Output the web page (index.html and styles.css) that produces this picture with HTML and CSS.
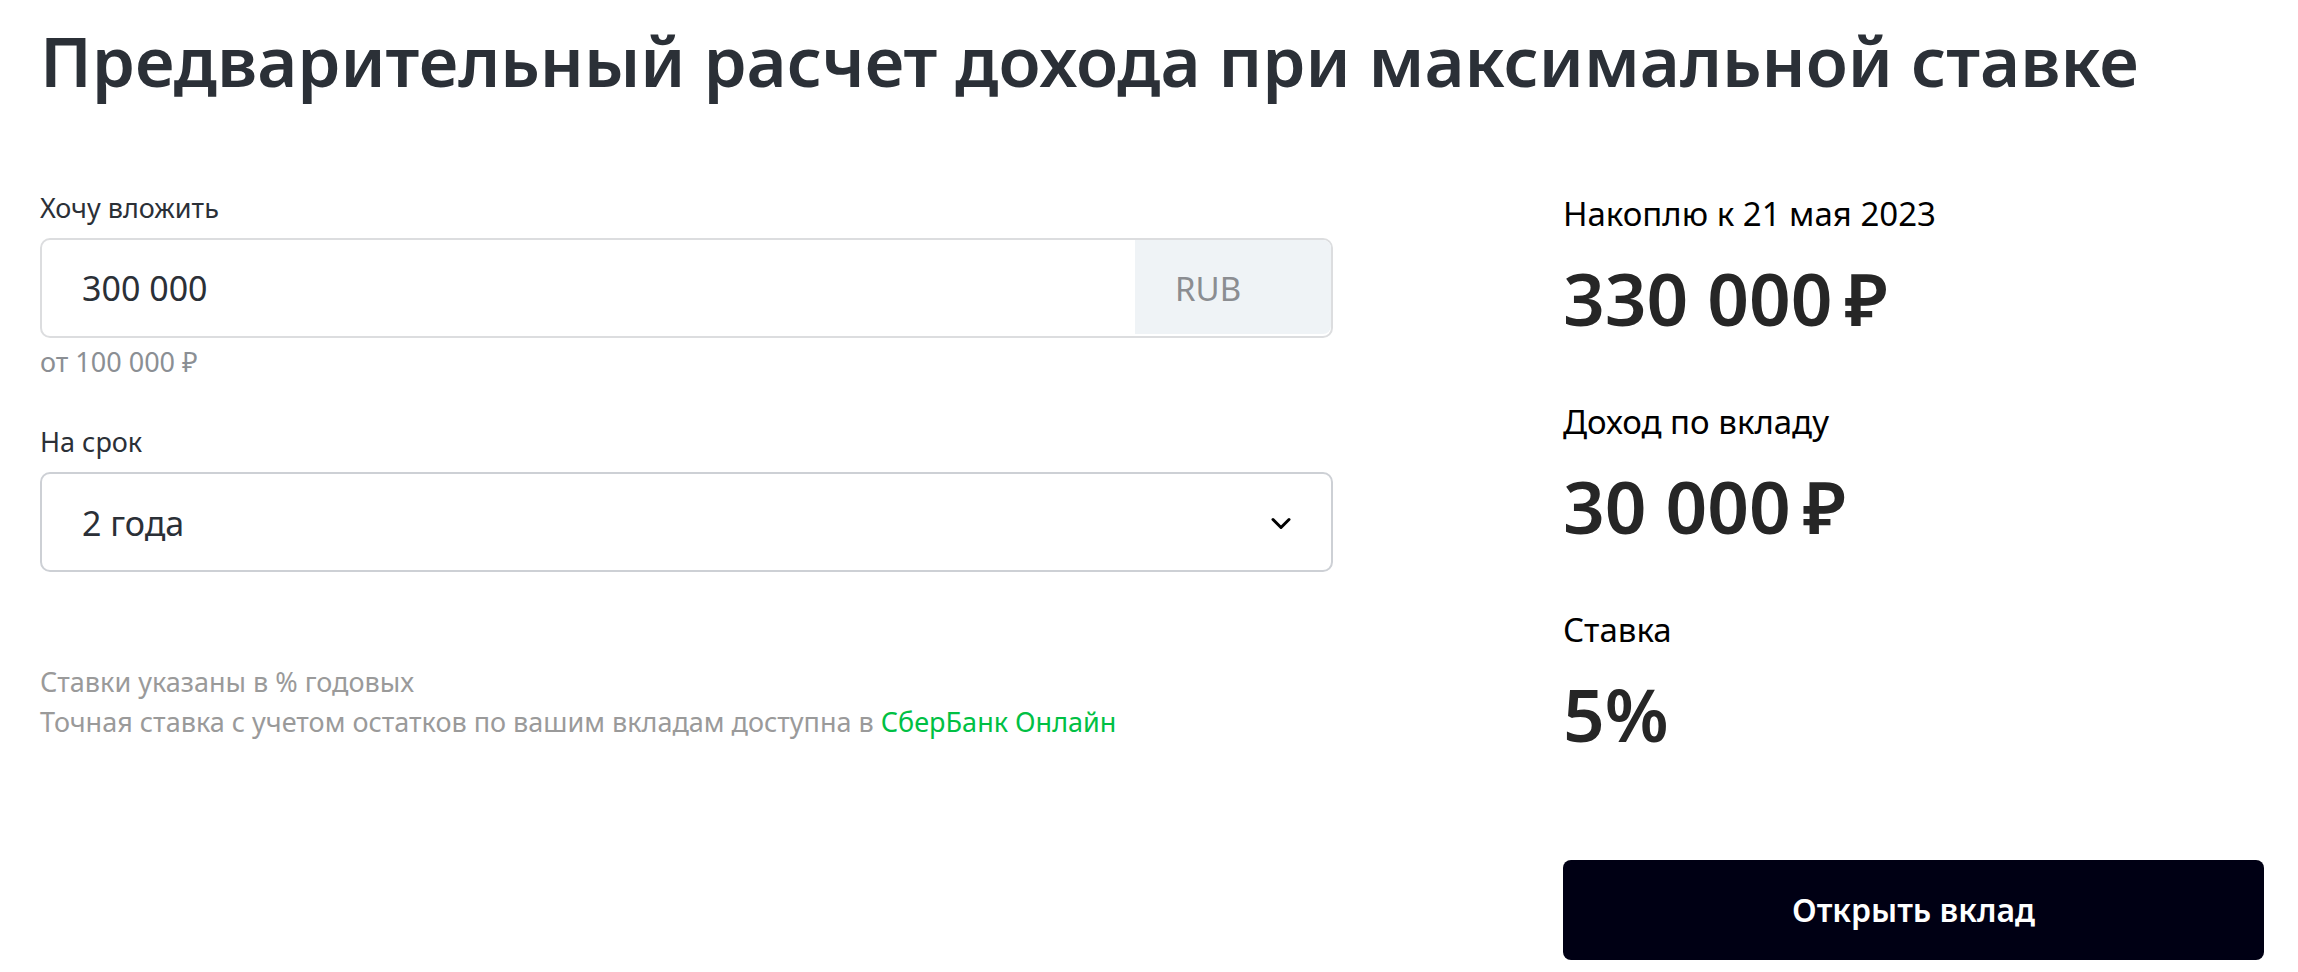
FILE: index.html
```html
<!DOCTYPE html>
<html lang="ru">
<head>
<meta charset="utf-8">
<meta name="viewport" content="width=device-width, initial-scale=1">
<title>Расчет дохода по вкладу</title>
<link rel="stylesheet" href="styles.css">
</head>
<body>
<main class="calculator">
  <h1 class="title">Предварительный расчет дохода при максимальной ставке</h1>
  <div class="columns">
    <form class="form">
      <div class="field">
        <label class="field-label" for="amount">Хочу вложить</label>
        <div class="amount-box">
          <input class="amount-input" id="amount" type="text" inputmode="numeric" value="300 000">
          <span class="currency">RUB</span>
        </div>
        <p class="hint">от 100 000 ₽</p>
      </div>
      <div class="field">
        <label class="field-label" for="term">На срок</label>
        <div class="select-box">
          <select class="term-select" id="term">
            <option>2 года</option>
          </select>
          <svg class="chevron" viewBox="0 0 20 14" aria-hidden="true"><path d="M2 2.5 10 10.5 18 2.5"/></svg>
        </div>
      </div>
      <p class="notes">Ставки указаны в % годовых<br>Точная ставка с учетом остатков по вашим вкладам доступна в <a class="link" href="#online">СберБанк Онлайн</a></p>
    </form>
    <section class="results">
      <dl class="result-list">
        <div class="result">
          <dt class="result-name">Накоплю к 21 мая 2023</dt>
          <dd class="result-value">330 000<span class="rouble">₽</span></dd>
        </div>
        <div class="result">
          <dt class="result-name">Доход по вкладу</dt>
          <dd class="result-value">30 000<span class="rouble">₽</span></dd>
        </div>
        <div class="result">
          <dt class="result-name">Ставка</dt>
          <dd class="result-value">5%</dd>
        </div>
      </dl>
      <button class="open-button" type="button">Открыть вклад</button>
    </section>
  </div>
</main>
</body>
</html>
```
FILE: styles.css
```css
* {
  box-sizing: border-box;
}

body {
  margin: 0;
  background: #fff;
  color: #2b3037;
  font-family: "Noto Sans", "Open Sans", sans-serif;
  font-size: 27px;
  line-height: 40px;
}

.calculator {
  padding: 14px 34px 12px 40px;
}

.title {
  margin: 0 0 82px;
  font-size: 69px;
  font-weight: 600;
  line-height: 92px;
}

.columns {
  display: grid;
  grid-template-columns: 1293fr 701fr;
  gap: 230px;
}

.field {
  display: flex;
  flex-direction: column;
  margin-bottom: 40px;
}

.field-label {
  margin-bottom: 10px;
}

.amount-box,
.select-box {
  display: flex;
  height: 100px;
  border: 2px solid #dcdddf;
  border-radius: 10px;
  background: #fff;
}

.select-box {
  position: relative;
  border-color: #cdd0d5;
}

.amount-input,
.term-select {
  flex: 1;
  min-width: 0;
  padding: 0 40px;
  border: 0;
  border-radius: 8px;
  background: transparent;
  color: inherit;
  font: inherit;
  font-size: 34px;
  appearance: none;
}

.term-select {
  padding-top: 2px;
}

.currency {
  display: flex;
  align-items: center;
  width: 196px;
  margin-bottom: 2px;
  padding: 4px 0 0 40px;
  border-radius: 0 8px 8px 0;
  background: #eff3f6;
  color: #8b8d91;
  font-size: 33px;
}

.chevron {
  position: absolute;
  top: 43px;
  right: 40px;
  width: 20px;
  height: 14px;
  fill: none;
  stroke: #000;
  stroke-width: 3;
  stroke-linecap: round;
  stroke-linejoin: round;
  pointer-events: none;
}

.hint {
  margin: 4px 0 0;
  color: #8b8f94;
}

.notes {
  margin: 90px 0 0;
  color: #9a9a9a;
}

.link {
  color: #00c044;
  text-decoration: none;
}

.results {
  padding-top: 2px;
}

.result-list {
  display: grid;
  gap: 54px;
  margin: 0 0 100px;
}

.result-name {
  margin-bottom: 14px;
  color: #000;
  font-size: 33px;
  line-height: 48px;
}

.result-value {
  margin: 0;
  color: #262626;
  font-size: 73px;
  font-weight: 600;
  line-height: 92px;
}

.rouble {
  margin-left: 12px;
}

.open-button {
  width: 100%;
  height: 100px;
  border: 0;
  border-radius: 8px;
  background: #000014;
  color: #fff;
  font: inherit;
  font-size: 32px;
  font-weight: 600;
}
```
